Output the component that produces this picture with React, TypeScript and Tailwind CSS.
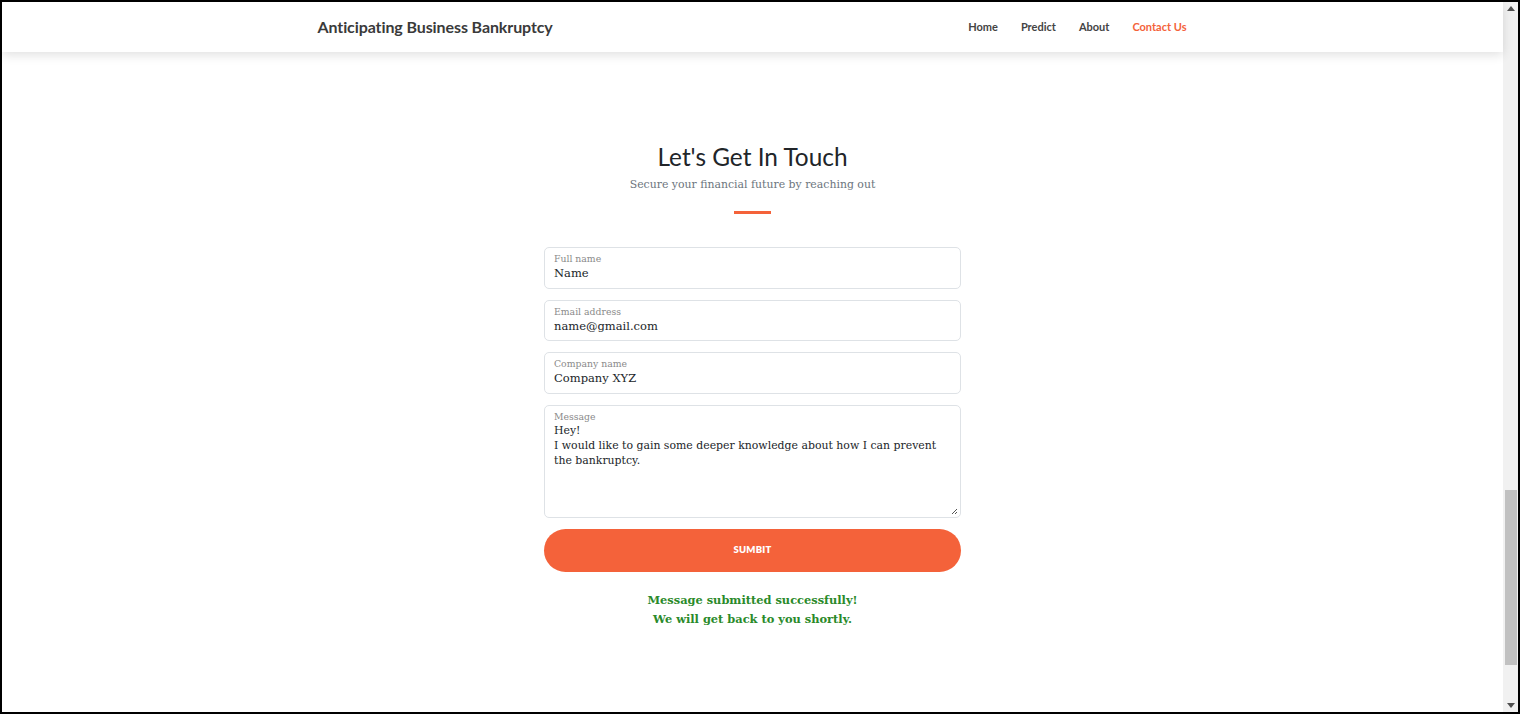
import React from "react";

const serif = { fontFamily: '"DejaVu Serif", "Liberation Serif", serif' };

function Field({ label, value }: { label: string; value: string }) {
  return (
    <div className="w-[417px] h-[41.5px] rounded-[5px] border border-[#dee2e6] bg-white px-[9px] pt-[5px]">
      <div className="text-[9.3px] leading-[12px] text-[#8a8a8a]" style={serif}>{label}</div>
      <div className="text-[11.5px] leading-[17px] text-[#212529]" style={serif}>{value}</div>
    </div>
  );
}

export default function App() {
  return (
    <div className="w-[1520px] h-[714px] border-2 border-black bg-white flex overflow-hidden box-border">
      <div className="flex-1 flex flex-col relative">
        <nav className="h-[50px] bg-white shadow-[0_3px_10px_rgba(0,0,0,0.12)] relative z-10 flex items-center">
          <div className="w-[870px] mx-auto flex items-center justify-between" style={{ fontFamily: 'Lato, "Open Sans", sans-serif' }}>
            <span className="text-[16px] font-bold text-[#3a3a3a] tracking-[-0.1px]">Anticipating Business Bankruptcy</span>
            <div className="flex items-center gap-[23px] text-[11px] font-bold text-[#444] pr-[1px]">
              <span>Home</span>
              <span>Predict</span>
              <span>About</span>
              <span className="text-[#f4623a]">Contact Us</span>
            </div>
          </div>
        </nav>
        <main className="flex-1 flex flex-col items-center pt-[90px]">
          <h1 className="text-[24.4px] leading-[30px] text-[#212529]" style={{ fontFamily: 'Lato, "Open Sans", sans-serif' }}>Let's Get In Touch</h1>
          <p className="mt-[5px] text-[10.9px] text-[#6c757d]" style={serif}>Secure your financial future by reaching out</p>
          <div className="mt-[18px] w-[37px] h-[3px] bg-[#f4623a]" />
          <div className="mt-[33px] flex flex-col gap-[11px]">
            <Field label="Full name" value="Name" />
            <Field label="Email address" value="name@gmail.com" />
            <Field label="Company name" value="Company XYZ" />
            <div className="relative w-[417px] h-[113px] rounded-[5px] border border-[#dee2e6] bg-white px-[9px] pt-[5px]">
              <div className="text-[9.3px] leading-[12px] text-[#8a8a8a]" style={serif}>Message</div>
              <div className="text-[10.9px] leading-[15px] text-[#212529] whitespace-nowrap" style={serif}>
                Hey!<br />
                I would like to gain some deeper knowledge about how I can prevent<br />
                the bankruptcy.
              </div>
              <svg className="absolute right-[2px] bottom-[2px]" width="8" height="8" viewBox="0 0 8 8">
                <path d="M7 2 L2 7 M7 5 L5 7" stroke="#555" strokeWidth="1" />
              </svg>
            </div>
            <button className="w-[417px] h-[43px] rounded-full bg-[#f4623a] text-white text-[9.5px] font-extrabold tracking-[0.2px]" style={{ fontFamily: 'Lato, "Open Sans", sans-serif' }}>
              SUMBIT
            </button>
          </div>
          <div className="mt-[19px] text-center text-[11.4px] leading-[19px] font-bold text-[#2a8a2a]" style={serif}>
            Message submitted successfully!<br />We will get back to you shortly.
          </div>
        </main>
      </div>
      <div className="w-[15px] bg-[#f1f1f1] flex flex-col items-center justify-between py-[4px] relative">
        <svg width="8" height="5" viewBox="0 0 8 5"><path d="M4 0 L8 5 L0 5 Z" fill="#505050" /></svg>
        <div className="absolute left-[2px] right-[1px] top-[488px] h-[175px] bg-[#c1c1c1]" />
        <svg width="8" height="5" viewBox="0 0 8 5"><path d="M0 0 L8 0 L4 5 Z" fill="#505050" /></svg>
      </div>
    </div>
  );
}
